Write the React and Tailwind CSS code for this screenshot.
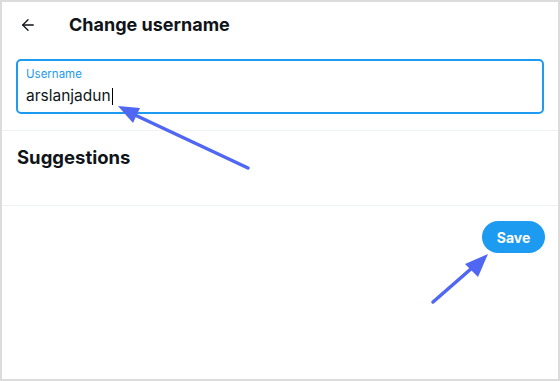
import { ArrowLeft } from "lucide-react";

export default function App() {
    return (
        <div
            className="relative w-[560px] h-[381px] border-2 border-[#dcdcdc] bg-white overflow-hidden text-[#0f1419]"
            style={{ fontFamily: "Inter, 'Noto Sans', sans-serif" }}
        >
            {/* header */}
            <div className="h-[45px] flex items-center pl-[17px]">
                <ArrowLeft className="w-[18px] h-[18px]" strokeWidth={1.75} />
                <h1 className="ml-[32px] text-[18px] font-bold">Change username</h1>
            </div>

            {/* input */}
            <div className="px-[14px] mt-[12px]">
                <div className="h-[55px] border-2 border-[#1d9bf0] rounded-[5px] px-[8px] pt-[6px]">
                    <div className="text-[11.5px] leading-[14px] text-[#1d9bf0]">Username</div>
                    <div className="mt-[5px] text-[15.5px] leading-[20px] flex items-center">
                        arslanjadun
                        <span className="ml-[1px] w-px h-[17px] bg-black" />
                    </div>
                </div>
            </div>

            <div className="mt-[16px] h-px bg-[#eff3f4]" />

            {/* suggestions */}
            <div className="h-[74px] px-[15px] pt-[14px]">
                <h2 className="text-[18.5px] leading-[24px] font-bold">Suggestions</h2>
            </div>

            <div className="h-px bg-[#eff3f4]" />

            {/* actions */}
            <div className="flex justify-end pr-[13px] pt-[15px]">
                <button className="w-[63px] h-[32px] rounded-full bg-[#1d9bf0] text-white text-[14px] font-bold">
                    Save
                </button>
            </div>

            {/* annotation arrows */}
            <svg className="absolute -left-[2px] -top-[2px] pointer-events-none" width="560" height="381">
                <line x1="248" y1="168" x2="135" y2="115" stroke="#4f67f2" strokeWidth="3.5" strokeLinecap="round" />
                <polygon points="118,106 140,108 133,123" fill="#4f67f2" />
                <line x1="433" y1="302" x2="472" y2="268" stroke="#4f67f2" strokeWidth="3.5" strokeLinecap="round" />
                <polygon points="488,254 465,264 478,277" fill="#4f67f2" />
            </svg>
        </div>
    );
}
